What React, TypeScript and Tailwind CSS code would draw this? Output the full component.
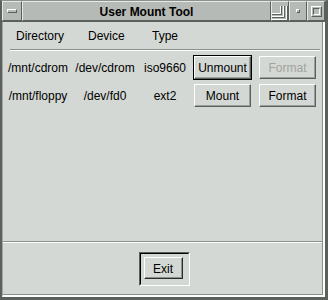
import React from "react";

function Btn({ label, focused, disabled }: { label: string; focused?: boolean; disabled?: boolean }) {
  return (
    <div className={focused ? "w-[59px] h-[25px] p-px bg-black" : "w-[59px] h-[25px] p-px"}>
      <div
        className={
          "w-full h-full bg-[#d4d8d4] border border-white border-r-[#5c605c] border-b-[#5c605c] shadow-[inset_-1px_-1px_0_#9ca09c] flex items-center justify-center text-[12px] leading-[14px] " +
          (disabled ? "text-[#a0a4a0]" : "text-black")
        }
      >
        {label}
      </div>
    </div>
  );
}

function TitleBtn({ children, w }: { children?: React.ReactNode; w: string }) {
  return (
    <div className={`${w} h-full bg-[#b6bab6] border border-[#e6eae6] border-r-[#5c605c] border-b-[#5c605c] relative flex items-center justify-center`}>
      {children}
    </div>
  );
}

export default function App() {
  return (
    <div className="w-[328px] h-[300px] flex flex-col bg-[#d4d8d4] border-l-2 border-r-[3px] border-b-[3px] border-[#5c605c] border-t border-t-[#8c908c] font-['Liberation_Sans',Arial,sans-serif] text-black">
      {/* title bar */}
      <div className="h-[21px] flex border-b border-[#5c605c] bg-[#5c605c]">
        <TitleBtn w="w-[20px]">
          <div className="w-[10px] h-[4px] border border-white border-r-[#5c605c] border-b-[#5c605c] bg-[#b6bab6]" />
        </TitleBtn>
        <div className="flex-1 h-full bg-[#b6bab6] border border-[#e6eae6] border-r-[#5c605c] border-b-[#5c605c] flex items-center justify-center pt-px text-[12px] font-bold leading-[14px]">
          User Mount Tool
        </div>
        <TitleBtn w="w-[18px]">
          <svg width="16" height="19" viewBox="0 0 16 19" className="absolute left-0 top-0">
            <path d="M8.5 4 V11.5 H0" stroke="#ffffff" strokeWidth="1" fill="none" />
            <path d="M9.5 4 V12.5 H0" stroke="#5c605c" strokeWidth="1" fill="none" />
            <path d="M11.5 4 V14.5 H0" stroke="#ffffff" strokeWidth="1" fill="none" />
            <path d="M12.5 4 V15.5 H0" stroke="#5c605c" strokeWidth="1" fill="none" />
            <path d="M14.5 4 V17.5 H0" stroke="#ffffff" strokeWidth="1" fill="none" />
            <path d="M15.5 4 V18.5 H0" stroke="#5c605c" strokeWidth="1" fill="none" />
          </svg>
        </TitleBtn>
        <TitleBtn w="w-[18px]">
          <div className="w-[4px] h-[4px] border border-white border-r-[#5c605c] border-b-[#5c605c] bg-[#b6bab6]" />
        </TitleBtn>
        <TitleBtn w="w-[18px]">
          <div className="w-[11px] h-[11px] border border-white border-r-[#5c605c] border-b-[#5c605c] p-px">
            <div className="w-full h-full border border-[#5c605c] border-r-white border-b-white" />
          </div>
        </TitleBtn>
      </div>

      {/* body */}
      <div className="flex-1 flex flex-col border-l border-l-[#a4a8a4] border-r-2 border-b-2 border-r-white border-b-white">
        <div className="flex-1 flex flex-col border-r border-b border-[#8c908c]">
          {/* header */}
          <div className="flex pt-[7px] pl-[13px] text-[12px] leading-[14px]">
            <span className="w-[72px]">Directory</span>
            <span className="w-[64px]">Device</span>
            <span>Type</span>
          </div>
          <div className="mt-[6px] ml-[7px] mr-[2px] border-t border-b border-t-[#8c908c] border-b-white" />

          {/* rows */}
          <div className="mt-[4px] flex flex-col gap-[3px] text-[12px] leading-[14px]">
            <div className="flex items-center">
              <span className="w-[70px] text-center">/mnt/cdrom</span>
              <span className="w-[64px] text-center">/dev/cdrom</span>
              <span className="w-[56px] text-center">iso9660</span>
              <Btn label="Unmount" focused />
              <div className="w-[6px]" />
              <Btn label="Format" disabled />
            </div>
            <div className="flex items-center">
              <span className="w-[70px] text-center">/mnt/floppy</span>
              <span className="w-[64px] text-center">/dev/fd0</span>
              <span className="w-[56px] text-center">ext2</span>
              <Btn label="Mount" />
              <div className="w-[6px]" />
              <Btn label="Format" />
            </div>
          </div>

          <div className="flex-1" />

          <div className="border-t border-b border-t-[#8c908c] border-b-white" />
          <div className="h-[51px] flex justify-center pl-[3px] pt-[9px]">
            <div className="w-[51px] h-[34px] border border-[#5c605c] border-r-white border-b-white">
              <div className="w-full h-full border border-black border-r-[#d4d8d4] border-b-[#d4d8d4] p-[3px]">
                <div className="w-[39px] h-[22px] bg-[#d4d8d4] border border-white border-r-[#2c2e2c] border-b-[#2c2e2c] shadow-[inset_-1px_-1px_0_#8c908c] flex items-center justify-center pt-px text-[12px] leading-[14px]">
                  Exit
                </div>
              </div>
            </div>
          </div>
        </div>
      </div>
    </div>
  );
}
